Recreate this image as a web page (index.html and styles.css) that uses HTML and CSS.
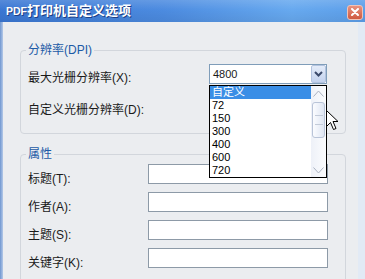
FILE: index.html
```html
<!DOCTYPE html>
<html lang="zh-CN">
<head>
    <meta charset="UTF-8">
    <title>PDF打印机自定义选项</title>
    <link rel="stylesheet" href="styles.css">
</head>
<body>
    <div class="window">
        <div class="titlebar">
            <span class="title"><span class="title-latin">PDF</span>打印机自定义选项</span>
            <span class="close-btn">
                <svg width="8" height="8" viewBox="0 0 8 8"><path d="M1 1 L7 7 M7 1 L1 7" stroke="#fff" stroke-width="2" stroke-linecap="round"/></svg>
            </span>
        </div>
        <div class="frame">
            <div class="frame-left"></div>
            <div class="client">
                <fieldset class="group">
                    <legend>分辨率(DPI)</legend>
                    <div class="row">
                        <label class="label label-wide">最大光栅分辨率(X):</label>
                        <div class="combo">
                            <span class="combo-value">4800</span>
                            <span class="combo-btn">
                                <svg width="9" height="6" viewBox="0 0 9 6"><path d="M1 1 L4.5 4.5 L8 1" fill="none" stroke="#3b4a6b" stroke-width="2"/></svg>
                            </span>
                            <div class="dropdown">
                                <div class="dropdown-items">
                                    <div class="item item-selected">自定义</div>
                                    <div class="item">72</div>
                                    <div class="item">150</div>
                                    <div class="item">300</div>
                                    <div class="item">400</div>
                                    <div class="item">600</div>
                                    <div class="item">720</div>
                                </div>
                                <div class="scrollbar">
                                    <div class="scroll-arrow">
                                        <svg width="11" height="7" viewBox="0 0 11 7"><path d="M0.5 6.5 L5.5 1 L10.5 6.5" fill="none" stroke="#a9b1c0"/></svg>
                                    </div>
                                    <div class="scroll-track">
                                        <div class="scroll-thumb">
                                            <span class="grip"></span>
                                            <span class="grip"></span>
                                        </div>
                                    </div>
                                    <div class="scroll-arrow">
                                        <svg width="11" height="7" viewBox="0 0 11 7"><path d="M0.5 0.5 L5.5 6 L10.5 0.5" fill="none" stroke="#a9b1c0"/></svg>
                                    </div>
                                </div>
                            </div>
                        </div>
                    </div>
                    <div class="row row-second">
                        <label class="label label-wide">自定义光栅分辨率(D):</label>
                        <div class="edit edit-short"></div>
                    </div>
                </fieldset>

                <fieldset class="group group-props">
                    <legend>属性</legend>
                    <div class="row prop-row">
                        <label class="label label-narrow">标题(T):</label>
                        <div class="edit"></div>
                    </div>
                    <div class="row prop-row">
                        <label class="label label-narrow">作者(A):</label>
                        <div class="edit"></div>
                    </div>
                    <div class="row prop-row">
                        <label class="label label-narrow">主题(S):</label>
                        <div class="edit"></div>
                    </div>
                    <div class="row prop-row">
                        <label class="label label-narrow">关键字(K):</label>
                        <div class="edit"></div>
                    </div>
                </fieldset>
            </div>
            <div class="frame-right"></div>
        </div>

        <!-- mouse pointer over the open list -->
        <svg class="cursor" width="13" height="21" viewBox="0 0 13 21">
            <path d="M0.5 0.5 L0.5 16.5 L4.5 12.5 L7.5 19.5 L10 18.5 L7 11.5 L12 11.5 Z" fill="#fff" stroke="#000" stroke-linejoin="round"/>
        </svg>
    </div>
</body>
</html>
```

FILE: styles.css
```css
body {
    margin: 0;
    font-family: "Liberation Sans", "Noto Sans CJK SC", sans-serif;
    font-size: 12px;
    color: #1a1a1a;
}
.window {
    position: relative;
    width: 365px;
    height: 279px;
    overflow: hidden;
    background: #ebedf0;
}
.titlebar {
    height: 22px;
    box-sizing: border-box;
    display: flex;
    align-items: center;
    justify-content: space-between;
    padding: 0 2px 0 6px;
    background:
        linear-gradient(rgba(255,255,255,0.14), rgba(255,255,255,0) 45%, rgba(0,0,0,0.06)),
        linear-gradient(to right, #3a77d3, #4c8be0 45%, #67a9ef 80%, #5c9ee9);
}
.title {
    color: #fff;
    font-weight: bold;
    font-size: 13px;
    line-height: 22px;
    text-shadow: 1px 1px 0 #1d3f86;
}
.title-latin {
    font-size: 10.5px;
}
.close-btn {
    width: 16px;
    height: 15px;
    box-sizing: border-box;
    border: 1px solid #f1c3b6;
    border-radius: 3px;
    background: linear-gradient(#e8927f, #cf5a41);
    display: flex;
    align-items: center;
    justify-content: center;
    margin-top: 2px;
}
.frame {
    display: flex;
    height: 257px;
}
.frame-left {
    width: 3px;
    background: linear-gradient(to right, #6f96d0, #b4c9e8);
}
.client {
    flex: 1;
    padding: 21px 0 0 17px;
    overflow: hidden;
}
.frame-right {
    width: 7px;
    background: #e2eaf5;
}
.group {
    width: 326px;
    min-width: 0;
    box-sizing: border-box;
    margin: 0;
    padding: 7px 7px 16px;
    border: 1px solid #d2d6dc;
    border-radius: 4px;
}
.group legend {
    padding: 0 2px;
    margin-left: -2px;
    color: #1c5aa6;
    font-size: 12px;
    line-height: 14px;
}
.group-props {
    margin-top: 13px;
    padding-top: 3px;
}
.row {
    display: flex;
    align-items: flex-start;
}
.row-second {
    margin-top: 11px;
}
.prop-row + .prop-row {
    margin-top: 6px;
}
.label {
    flex: 0 0 auto;
    line-height: 14px;
    margin-top: 7px;
}
.label-wide {
    width: 181px;
}
.label-narrow {
    width: 120px;
    margin-top: 8px;
}
.edit {
    width: 180px;
    height: 20px;
    box-sizing: border-box;
    border: 1px solid #8d9aa7;
    background: #fff;
}
.edit-short {
    width: 118px;
}
.combo {
    position: relative;
    width: 118px;
    height: 20px;
    box-sizing: border-box;
    border: 1px solid #7f9db9;
    background: #fff;
    display: flex;
    align-items: center;
    justify-content: space-between;
}
.combo-value {
    padding-left: 3px;
    font-size: 11px;
}
.combo-btn {
    width: 15px;
    height: 18px;
    box-sizing: border-box;
    border: 1px solid #b3c3df;
    border-radius: 2px;
    background: linear-gradient(#e4ecf9, #c3d2ee);
    display: flex;
    align-items: center;
    justify-content: center;
}
.dropdown {
    position: absolute;
    left: -1px;
    top: 20px;
    z-index: 2;
    width: 118px;
    height: 93px;
    box-sizing: border-box;
    border: 1px solid #000;
    background: #fff;
    display: flex;
}
.dropdown-items {
    flex: 1;
}
.item {
    height: 13px;
    line-height: 13px;
    padding-left: 2px;
    font-size: 11px;
    color: #000;
}
.item-selected {
    background: #3a8ee6;
    color: #fff;
}
.scrollbar {
    width: 15px;
    display: flex;
    flex-direction: column;
    background: linear-gradient(to right, #eef1f8, #fbfcfe);
}
.scroll-arrow {
    height: 14px;
    display: flex;
    align-items: center;
    justify-content: center;
}
.scroll-track {
    flex: 1;
}
.scroll-thumb {
    height: 36px;
    margin: 2px 1px 0;
    box-sizing: border-box;
    border: 1px solid #b9c4d8;
    border-radius: 3px;
    background: linear-gradient(to right, #fbfcff, #dfe6f3);
    display: flex;
    flex-direction: column;
    align-items: center;
    justify-content: center;
    gap: 8px;
}
.grip {
    width: 8px;
    height: 1px;
    background: #c3cbd9;
}
.cursor {
    position: absolute;
    left: 326px;
    top: 110px;
    z-index: 3;
}
```
